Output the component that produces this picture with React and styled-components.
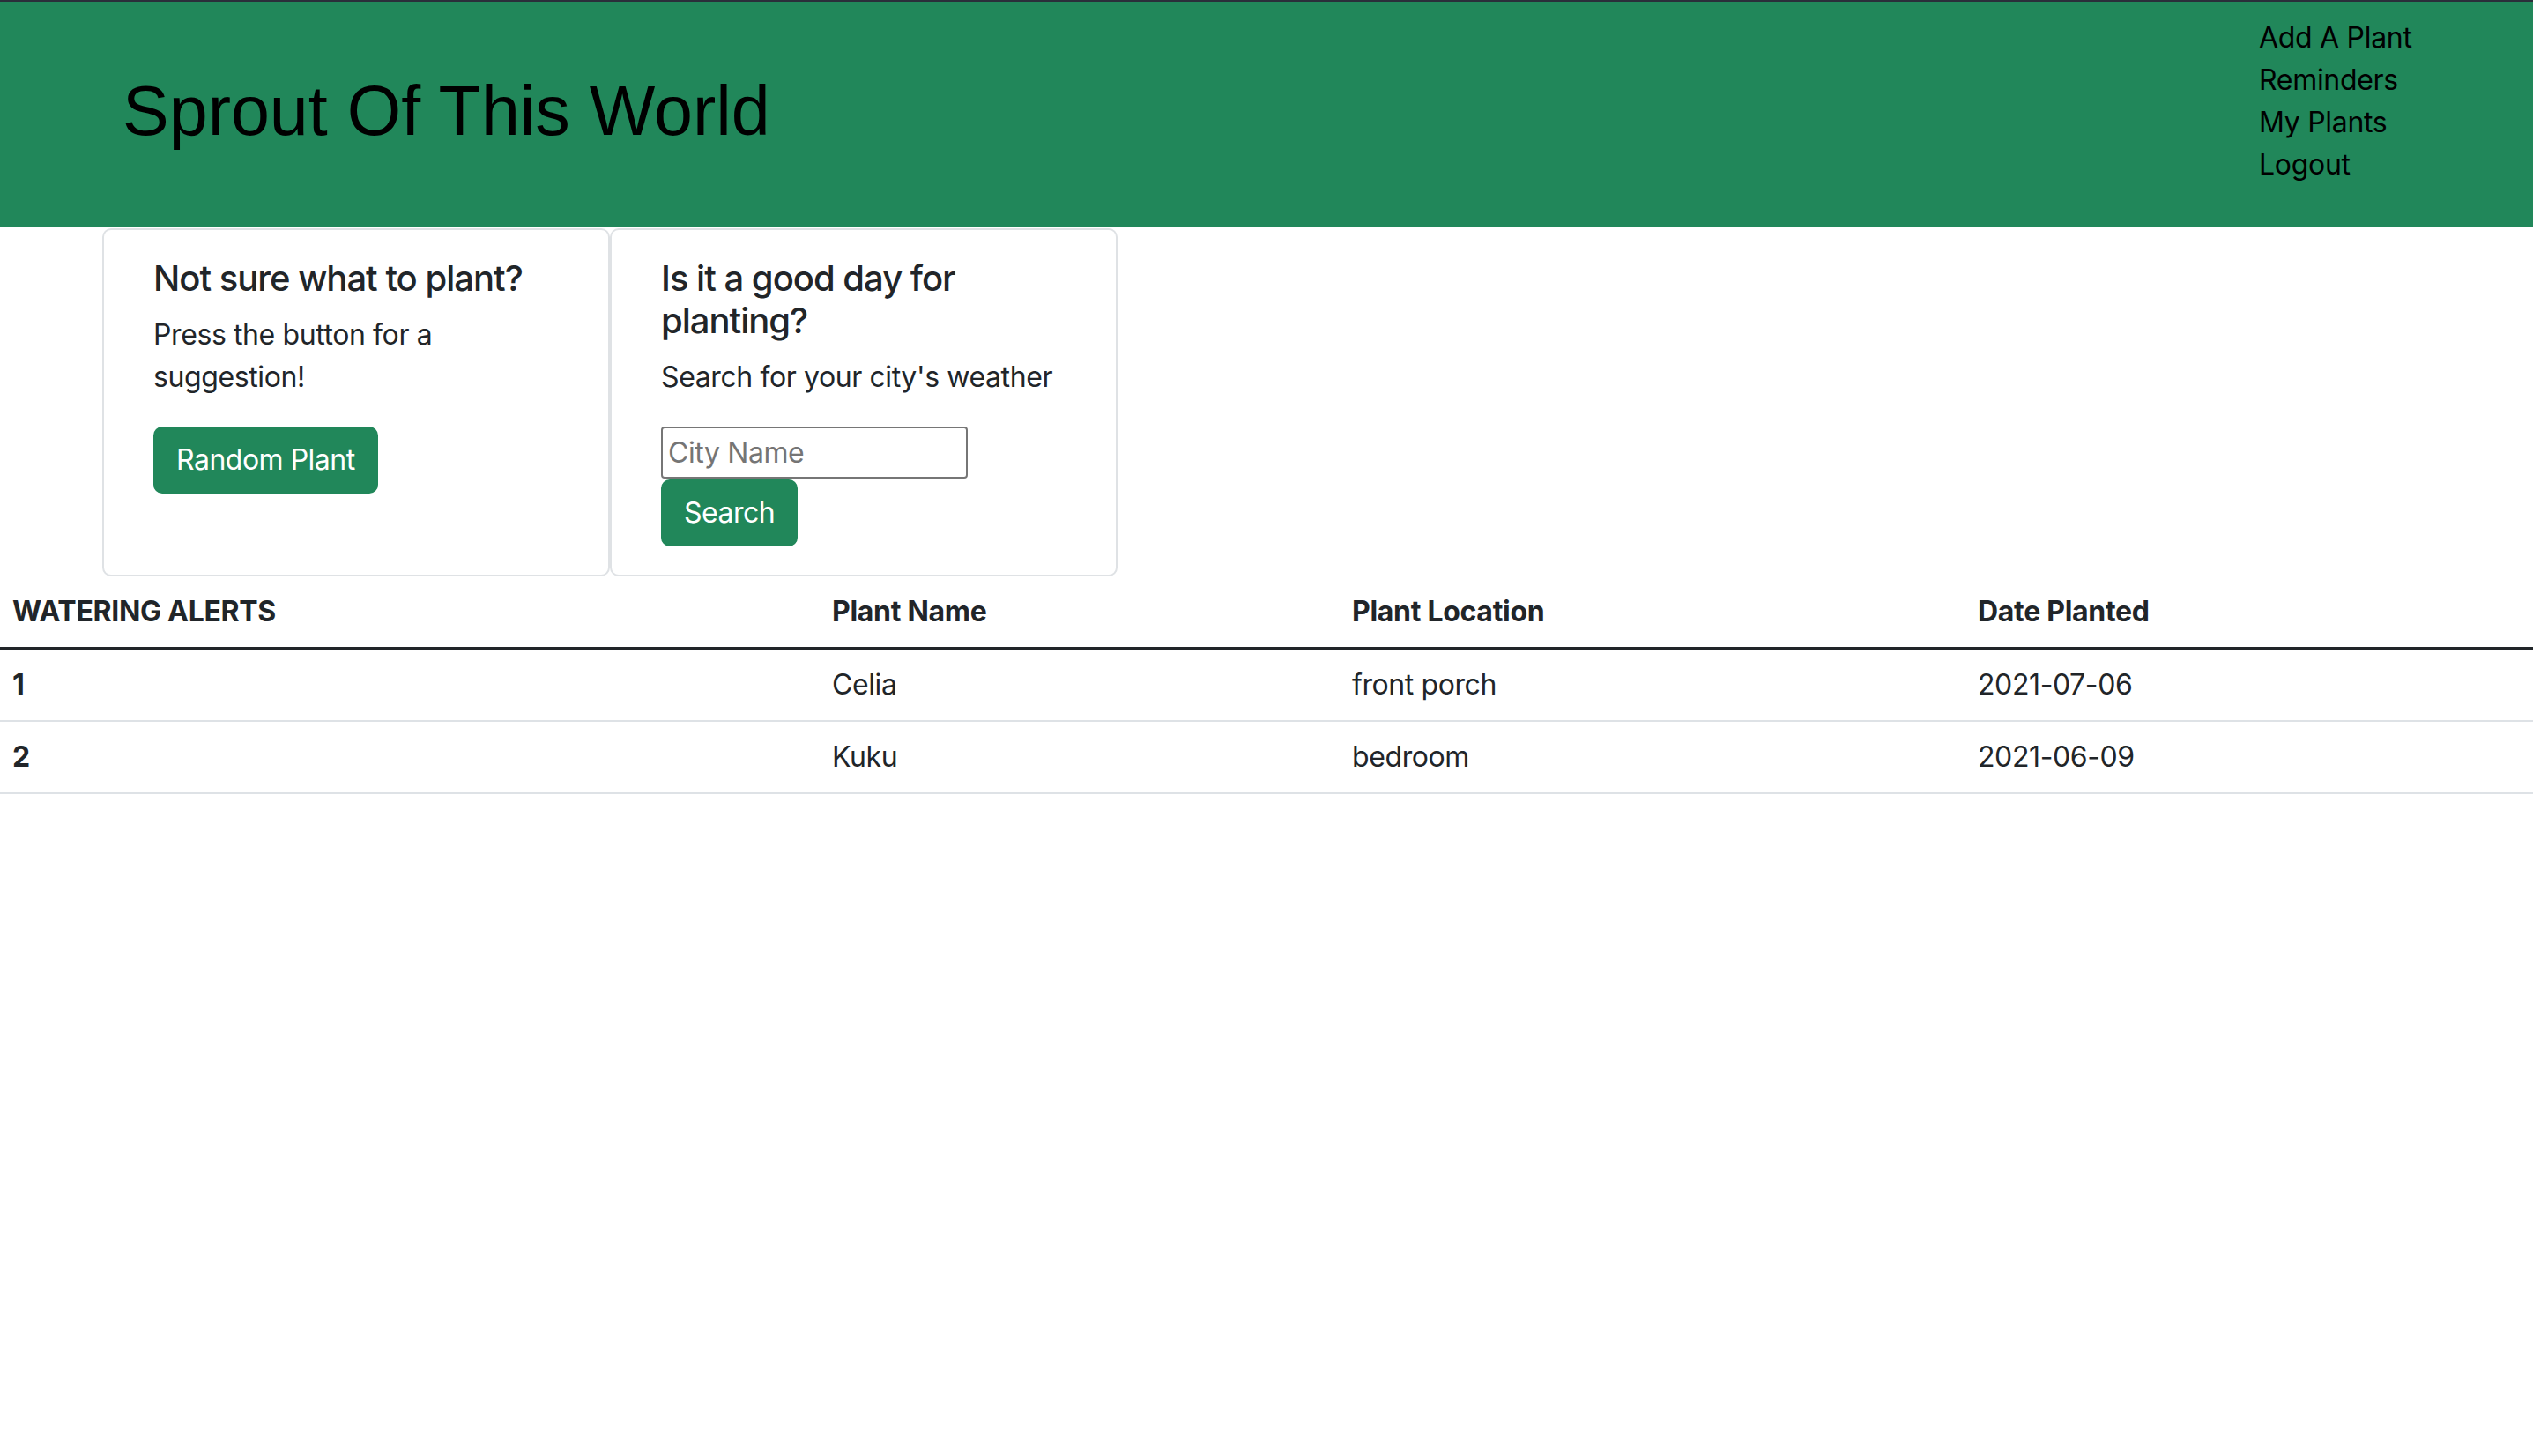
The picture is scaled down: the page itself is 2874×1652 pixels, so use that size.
import React from "react";
import styled, { createGlobalStyle } from "styled-components";

const GlobalStyle = createGlobalStyle`
  body {
    margin: 0;
    background: #fff;
    color: #212529;
    font-family: Inter, "Noto Sans", sans-serif;
    font-size: 32px;
    line-height: 48px;
    letter-spacing: -0.4px;
  }
  * { box-sizing: border-box; }
`;

const Header = styled.header`
  display: flex;
  justify-content: space-between;
  align-items: flex-start;
  height: 258px;
  background: #21875a;
  border-top: 2px solid #2a2e3a;
`;

const Title = styled.h1`
  margin: 0;
  padding: 76px 0 0 139px;
  font-family: "Liberation Sans", Arial, sans-serif;
  font-size: 79px;
  line-height: 95px;
  font-weight: 400;
  letter-spacing: 0;
  color: #000;
`;

const Nav = styled.nav`
  width: 311px;
  flex-shrink: 0;
  display: flex;
  flex-direction: column;
  padding-top: 17px;
`;

const NavLink = styled.a`
  color: #000;
  text-decoration: none;
  font-size: 32px;
  line-height: 48px;
  letter-spacing: -0.3px;
`;

const CardRow = styled.section`
  display: flex;
  padding: 1px 0 0 116px;
`;

const Card = styled.div`
  width: 576px;
  border: 2px solid #dfe2e5;
  border-radius: 10px;
  padding: 31px 56px 32px;
  display: flex;
  flex-direction: column;
  align-items: flex-start;
`;

const CardTitle = styled.h5`
  margin: 0 0 16px;
  font-size: 40px;
  line-height: 48px;
  font-weight: 500;
  letter-spacing: -1px;
`;

const CardText = styled.p`
  margin: 0 0 32px;
`;

const Button = styled.button`
  font-family: inherit;
  font-size: 32px;
  line-height: 48px;
  letter-spacing: -0.5px;
  color: #fff;
  background: #21875a;
  border: 2px solid #21875a;
  border-radius: 10px;
  padding: 12px 24px;
  cursor: pointer;
`;

const CityInput = styled.input`
  width: 348px;
  height: 59px;
  margin-bottom: 1px;
  font-family: inherit;
  font-size: 32px;
  letter-spacing: -0.4px;
  padding: 0 6px;
  border: 2px solid #767676;
  border-radius: 4px;
  color: #212529;
  &::placeholder { color: #757575; }
`;

const Table = styled.table`
  width: 100%;
  border-collapse: collapse;
  color: #212529;
`;

const Th = styled.th`
  text-align: left;
  font-weight: 700;
  letter-spacing: -0.3px;
  padding: 16px 14px;
  width: ${p => p.$w || "auto"};
`;

const HeadRow = styled.tr`
  border-bottom: 3px solid #212529;
`;

const Row = styled.tr`
  border-bottom: 2px solid #dee2e6;
`;

const Td = styled.td`
  padding: 16px 14px;
`;

const plants = [
  { id: 1, name: "Celia", location: "front porch", date: "2021-07-06" },
  { id: 2, name: "Kuku", location: "bedroom", date: "2021-06-09" },
];

export default function App() {
  return (
    <>
      <GlobalStyle />
      <Header>
        <Title>Sprout Of This World</Title>
        <Nav>
          <NavLink href="#">Add A Plant</NavLink>
          <NavLink href="#">Reminders</NavLink>
          <NavLink href="#">My Plants</NavLink>
          <NavLink href="#">Logout</NavLink>
        </Nav>
      </Header>

      <CardRow>
        <Card>
          <CardTitle>Not sure what to plant?</CardTitle>
          <CardText>Press the button for a suggestion!</CardText>
          <Button>Random Plant</Button>
        </Card>
        <Card>
          <CardTitle>Is it a good day for planting?</CardTitle>
          <CardText>Search for your city's weather</CardText>
          <CityInput placeholder="City Name" />
          <Button>Search</Button>
        </Card>
      </CardRow>

      <Table>
        <thead>
          <HeadRow>
            <Th $w="930px">WATERING ALERTS</Th>
            <Th $w="590px">Plant Name</Th>
            <Th $w="710px">Plant Location</Th>
            <Th>Date Planted</Th>
          </HeadRow>
        </thead>
        <tbody>
          {plants.map(p => (
            <Row key={p.id}>
              <Th scope="row">{p.id}</Th>
              <Td>{p.name}</Td>
              <Td>{p.location}</Td>
              <Td>{p.date}</Td>
            </Row>
          ))}
        </tbody>
      </Table>
    </>
  );
}
